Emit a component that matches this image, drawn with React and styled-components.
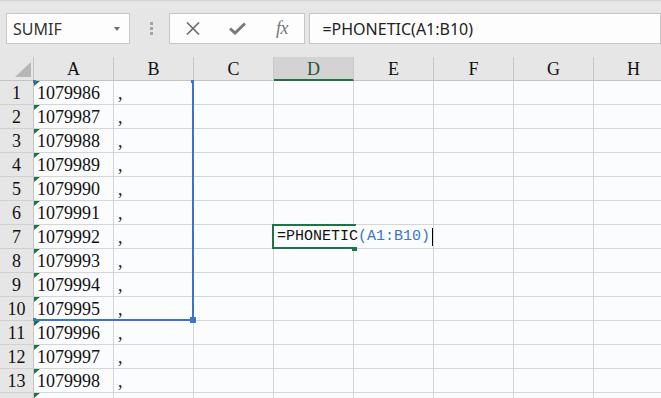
import React from "react";
import styled, { createGlobalStyle } from "styled-components";

const GlobalStyle = createGlobalStyle`
  html, body {
    margin: 0;
    padding: 0;
    background: #e6e6e6;
    overflow: hidden;
  }
`;

const Page = styled.div`
  width: 661px;
  height: 398px;
  overflow: hidden;
  background: #e6e6e6;
`;

const Toolbar = styled.div`
  box-sizing: border-box;
  height: 57px;
  display: flex;
  align-items: flex-start;
  padding: 12px 0 0 6px;
  border-top: 1px solid #d2d2d2;
  font-family: "Noto Sans", "Open Sans", sans-serif;
`;

const NameBox = styled.div`
  box-sizing: border-box;
  width: 127px;
  height: 31px;
  background: #fdfdfd;
  border: 1px solid #c6c6c6;
  display: flex;
  align-items: center;
  justify-content: space-between;
  padding: 0 9px 0 6px;
  font-size: 16px;
  color: #333;
`;

const Caret = styled.span`
  width: 0;
  height: 0;
  border-left: 3.5px solid transparent;
  border-right: 3.5px solid transparent;
  border-top: 4px solid #707070;
`;

const Grip = styled.div`
  width: 37px;
  height: 31px;
  padding-left: 3px;
  display: flex;
  flex-direction: column;
  align-items: center;
  justify-content: center;
  gap: 2px;
  span {
    width: 3px;
    height: 3px;
    background: #a4a4a4;
  }
`;

const ButtonBox = styled.div`
  box-sizing: border-box;
  width: 136px;
  height: 31px;
  background: #fdfdfd;
  border: 1px solid #c6c6c6;
  display: flex;
  align-items: center;
`;

const IconSlot = styled.div`
  width: 45px;
  height: 29px;
  display: flex;
  align-items: center;
  justify-content: center;
  color: #767676;
`;

const Fx = styled.span`
  font-family: "Liberation Serif", serif;
  font-style: italic;
  font-size: 18px;
  color: #777;
  letter-spacing: -0.5px;
`;

const FormulaBox = styled.div`
  box-sizing: border-box;
  margin-left: 4px;
  width: 360px;
  height: 31px;
  background: #fdfdfd;
  border: 1px solid #c6c6c6;
  display: flex;
  align-items: center;
  padding-left: 12px;
  font-size: 16px;
  color: #222;
`;

const Sheet = styled.div`
  position: relative;
  display: grid;
  grid-template-columns: 34px repeat(8, 80px);
  grid-auto-rows: 24px;
  font-family: "Liberation Serif", serif;
  font-size: 18px;
  color: #111;
`;

const Corner = styled.div`
  box-sizing: border-box;
  background: #e6e6e6;
  border-right: 1px solid #c4c4c4;
  border-bottom: 1px solid #c4c4c4;
  position: relative;
  &::after {
    content: "";
    position: absolute;
    right: 2px;
    bottom: 3px;
    width: 0;
    height: 0;
    border-left: 16px solid transparent;
    border-bottom: 15px solid #b6b6b6;
  }
`;

const ColHead = styled.div`
  box-sizing: border-box;
  background: ${(p) => (p.$active ? "#d3d3d3" : "#e6e6e6")};
  border-right: 1px solid #c8c8c8;
  border-bottom: ${(p) => (p.$active ? "2px solid #217346" : "1px solid #c4c4c4")};
  display: flex;
  align-items: center;
  justify-content: center;
  padding-top: 2px;
  color: ${(p) => (p.$active ? "#24543c" : "#111")};
`;

const RowHead = styled.div`
  box-sizing: border-box;
  background: #e6e6e6;
  border-right: 1px solid #c4c4c4;
  border-bottom: 1px solid #d0d0d0;
  display: flex;
  align-items: center;
  justify-content: center;
  padding-top: 2px;
  color: #111;
`;

const Cell = styled.div`
  box-sizing: border-box;
  position: relative;
  background: #fbfcfe;
  border-right: 1px solid #d6d6d6;
  border-bottom: 1px solid #d6d6d6;
  display: flex;
  align-items: center;
  padding: 2px 0 0 ${(p) => (p.$pad ? p.$pad : 3)}px;
  white-space: nowrap;
  ${(p) =>
    p.$flag &&
    `
    &::before {
      content: "";
      position: absolute;
      left: 0;
      top: 0;
      width: 0;
      height: 0;
      border-top: 5px solid #1e7145;
      border-right: 6px solid transparent;
    }
  `}
`;

const RangeFrame = styled.div`
  position: absolute;
  left: 33px;
  top: 23px;
  width: 161px;
  height: 241px;
  box-sizing: border-box;
  border-right: 2px solid #3d72c4;
  border-bottom: 2px solid #3d72c4;
  pointer-events: none;
`;

const Handle = styled.span`
  position: absolute;
  background: #3d72c4;
  width: ${(p) => p.$size}px;
  height: ${(p) => p.$size}px;
  ${(p) => p.$pos}
`;

const ActiveFrame = styled.div`
  position: absolute;
  left: 272px;
  top: 167px;
  width: 84px;
  height: 25px;
  box-sizing: border-box;
  border: 2px solid #217346;
  &::after {
    content: "";
    position: absolute;
    right: -3px;
    bottom: -4px;
    width: 5px;
    height: 5px;
    background: #217346;
  }
`;

const Editor = styled.div`
  position: absolute;
  left: 274px;
  top: 169px;
  width: 159px;
  height: 21px;
  background: #fbfcfe;
  display: flex;
  align-items: center;
  padding-left: 3px;
  box-sizing: border-box;
  font-family: "Liberation Mono", monospace;
  font-size: 15px;
  color: #111;
  white-space: nowrap;
`;

const Ref = styled.span`
  color: #3f75c3;
`;

const Caretline = styled.span`
  display: inline-block;
  width: 1px;
  height: 18px;
  background: #000;
  margin-left: 2px;
`;

const cols = ["A", "B", "C", "D", "E", "F", "G", "H"];

export default function App() {
  const rows = Array.from({ length: 14 }, (_, i) => i + 1);
  return (
    <Page>
      <GlobalStyle />
      <Toolbar>
        <NameBox>
          <span>SUMIF</span>
          <Caret />
        </NameBox>
        <Grip>
          <span />
          <span />
          <span />
        </Grip>
        <ButtonBox>
          <IconSlot>
            <svg width="14" height="13" viewBox="0 0 14 13">
              <path d="M1 0.5 L13 12.5 M13 0.5 L1 12.5" stroke="#707070" strokeWidth="1.7" fill="none" />
            </svg>
          </IconSlot>
          <IconSlot>
            <svg width="17" height="13" viewBox="0 0 17 13">
              <path d="M1 6.5 L6 11 L16 1.5" stroke="#7a7a7a" strokeWidth="3" fill="none" />
            </svg>
          </IconSlot>
          <IconSlot>
            <Fx>fx</Fx>
          </IconSlot>
        </ButtonBox>
        <FormulaBox>=PHONETIC(A1:B10)</FormulaBox>
      </Toolbar>
      <Sheet>
        <Corner />
        {cols.map((c) => (
          <ColHead key={c} $active={c === "D"}>
            {c}
          </ColHead>
        ))}
        {rows.map((r) => (
          <React.Fragment key={r}>
            <RowHead>{r <= 13 ? r : ""}</RowHead>
            {cols.map((c) => {
              if (c === "A") {
                return (
                  <Cell key={c} $flag>
                    {r <= 13 ? 1079985 + r : ""}
                  </Cell>
                );
              }
              if (c === "B") {
                return (
                  <Cell key={c} $pad={4}>
                    {r <= 13 ? "," : ""}
                  </Cell>
                );
              }
              return <Cell key={c} />;
            })}
          </React.Fragment>
        ))}
        <RangeFrame>
          <Handle $size={3} $pos="left: 0; top: 0;" />
          <Handle $size={3} $pos="left: 0; bottom: -2px;" />
          <Handle $size={3} $pos="right: -2px; top: 0;" />
          <Handle $size={6} $pos="right: -4px; bottom: -4px;" />
        </RangeFrame>
        <ActiveFrame />
        <Editor>
          =PHONETIC<Ref>(A1:B10)</Ref>
          <Caretline />
        </Editor>
      </Sheet>
    </Page>
  );
}
